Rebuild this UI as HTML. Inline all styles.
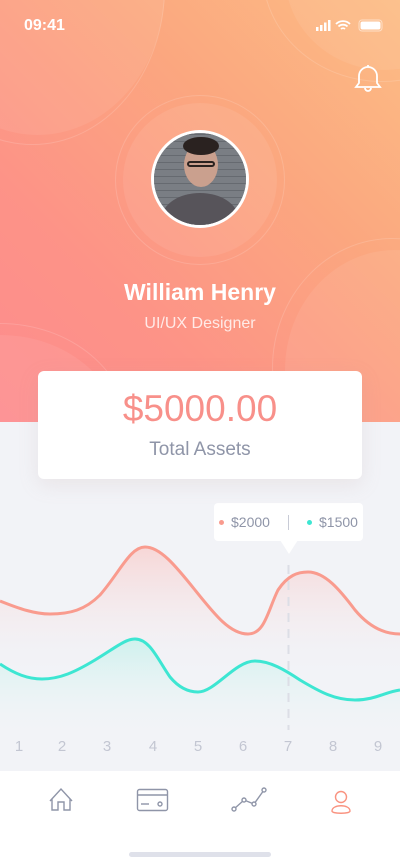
<!DOCTYPE html>
<html><head><meta charset="utf-8"><style>
*{margin:0;padding:0;box-sizing:border-box}
body{width:400px;height:866px;overflow:hidden;font-family:"Liberation Sans",sans-serif;background:#f2f3f7;position:relative}
.hdr{position:absolute;left:0;top:0;width:400px;height:422px;overflow:hidden;background:linear-gradient(225deg,#fcbd85 0%,#fba77f 35%,#fd9387 70%,#fd8c8e 100%)}
.c{position:absolute;border-radius:50%}
.abs{position:absolute}
</style></head><body>
<div class="hdr">
 <div class="c" style="left:-90px;top:-160px;width:255px;height:295px;background:rgba(255,255,255,.07)"></div>
 <div class="c" style="left:-100px;top:-170px;width:265px;height:315px;border:1px solid rgba(255,255,255,.15)"></div>
 <div class="c" style="left:285px;top:-120px;width:200px;height:190px;background:rgba(255,255,255,.07)"></div>
 <div class="c" style="left:262px;top:-140px;width:240px;height:222px;border:1px solid rgba(255,255,255,.15)"></div>
 <div class="c" style="left:285px;top:250px;width:220px;height:240px;background:rgba(255,255,255,.07)"></div>
 <div class="c" style="left:272px;top:238px;width:240px;height:260px;border:1px solid rgba(255,255,255,.15)"></div>
 <div class="c" style="left:-120px;top:335px;width:240px;height:200px;background:rgba(255,255,255,.07)"></div>
 <div class="c" style="left:-130px;top:323px;width:260px;height:220px;border:1px solid rgba(255,255,255,.15)"></div>
 <div class="c" style="left:123px;top:103px;width:154px;height:154px;background:rgba(255,255,255,.08)"></div>
 <div class="c" style="left:115px;top:95px;width:170px;height:170px;border:1px solid rgba(255,255,255,.15)"></div>
 <div class="c" style="left:151px;top:130px;width:98px;height:98px;background:#fff"></div>
 <div class="c" style="left:154px;top:133px;width:92px;height:92px;overflow:hidden;background:#6e7278">
  <div class="abs" style="left:0;top:0;width:92px;height:92px;background:repeating-linear-gradient(0deg,#7a7e84 0 6px,#666a70 6px 7px)"></div>
  <div class="c" style="left:8px;top:60px;width:76px;height:50px;background:#57545a"></div>
  <div class="c" style="left:30px;top:10px;width:34px;height:44px;background:#caa08e"></div>
  <div class="c" style="left:29px;top:4px;width:36px;height:18px;background:#2a2220"></div>
  <div class="abs" style="left:33px;top:28px;width:28px;height:6px;border:2px solid #2a2220;border-radius:3px"></div>
 </div>
 <div class="abs" style="left:24px;top:17px;color:#fff;font-size:16px;font-weight:bold">09:41</div>
 <svg class="abs" style="left:314px;top:18px" width="70" height="16" viewBox="0 0 70 16">
  <g fill="#fff"><rect x="2" y="9" width="2.5" height="4"/><rect x="6" y="7" width="2.5" height="6"/><rect x="10" y="4.5" width="2.5" height="8.5"/><rect x="14" y="2" width="2.5" height="11"/></g>
  <path d="M22 6a10 10 0 0 1 14 0M24.5 8.5a6.5 6.5 0 0 1 9 0M27 11a3 3 0 0 1 4 0" stroke="#fff" stroke-width="1.8" fill="none"/>
  <rect x="45" y="2" width="23" height="11" rx="3" fill="none" stroke="rgba(255,255,255,.5)"/><rect x="46.5" y="3.5" width="20" height="8" rx="2" fill="#fff"/>
 </svg>
 <svg class="abs" style="left:352px;top:63px" width="32" height="32" viewBox="0 0 32 32" fill="none" stroke="#fff" stroke-width="1.8">
  <path d="M4 24h24l-3-4V13a9 9 0 0 0-18 0v7z"/><path d="M13 25a3 3 0 0 0 6 0"/><path d="M16 2v2"/>
 </svg>
 <div class="abs" style="left:0;width:400px;top:279px;text-align:center;color:#fff;font-size:23px;font-weight:bold">William Henry</div>
 <div class="abs" style="left:0;width:400px;top:315px;text-align:center;color:rgba(255,255,255,.8);font-size:16px">UI/UX Designer</div>
</div>
<svg class="abs" style="left:0;top:480px" width="400" height="290" viewBox="0 480 400 290">
 <defs>
  <linearGradient id="r" x1="0" y1="0" x2="0" y2="1"><stop offset="0" stop-color="#fbc3c0" stop-opacity=".6"/><stop offset="1" stop-color="#f2f3f7" stop-opacity="0"/></linearGradient>
  <linearGradient id="t" x1="0" y1="0" x2="0" y2="1"><stop offset="0" stop-color="#b6f2e8" stop-opacity=".6"/><stop offset="1" stop-color="#f2f3f7" stop-opacity="0"/></linearGradient>
 </defs>
 <path d="M0 601C20 609 35 614 50 614C70 614 85 610 100 595C120 572 130 547 145 547C160 547 175 565 195 590C215 615 230 634 248 634C265 634 268 610 278 590C288 575 298 572 308 572C325 572 340 590 355 610C370 628 385 634 400 634V680H0Z" fill="url(#r)"/>
 <path d="M0 601C20 609 35 614 50 614C70 614 85 610 100 595C120 572 130 547 145 547C160 547 175 565 195 590C215 615 230 634 248 634C265 634 268 610 278 590C288 575 298 572 308 572C325 572 340 590 355 610C370 628 385 634 400 634" fill="none" stroke="#f99b8e" stroke-width="3"/>
 <path d="M0 664C15 674 28 679 42 679C60 679 75 672 95 660C115 648 125 639 135 639C150 639 158 660 170 677C180 689 190 692 198 692C215 692 235 661 255 661C270 661 285 670 300 680C320 692 335 700 355 700C375 700 385 692 400 690V740H0Z" fill="url(#t)"/>
 <path d="M0 664C15 674 28 679 42 679C60 679 75 672 95 660C115 648 125 639 135 639C150 639 158 660 170 677C180 689 190 692 198 692C215 692 235 661 255 661C270 661 285 670 300 680C320 692 335 700 355 700C375 700 385 692 400 690" fill="none" stroke="#3de6d2" stroke-width="3"/>
 <line x1="288.5" y1="565" x2="288.5" y2="730" stroke="#dcdee6" stroke-width="2" stroke-dasharray="9 7"/>
 <g font-family="Liberation Sans" font-size="15" fill="#c3c6d2" text-anchor="middle">
  <text x="19" y="751">1</text><text x="62" y="751">2</text><text x="107" y="751">3</text><text x="153" y="751">4</text><text x="198" y="751">5</text><text x="243" y="751">6</text><text x="288" y="751">7</text><text x="333" y="751">8</text><text x="378" y="751">9</text>
 </g>
</svg>
<div class="abs" style="left:214px;top:503px;width:149px;height:38px;background:#fff;border-radius:4px"></div>
<div class="abs" style="left:280px;top:540px;width:0;height:0;border-left:9px solid transparent;border-right:9px solid transparent;border-top:14px solid #fff"></div>
<div class="abs" style="left:219px;top:520px;width:5px;height:5px;border-radius:50%;background:#f99b8e"></div>
<div class="abs" style="left:231px;top:514px;font-size:14px;color:#8f95a8">$2000</div>
<div class="abs" style="left:288px;top:515px;width:1px;height:15px;background:#c8cbd6"></div>
<div class="abs" style="left:307px;top:520px;width:5px;height:5px;border-radius:50%;background:#3de6d2"></div>
<div class="abs" style="left:319px;top:514px;font-size:14px;color:#8f95a8">$1500</div>
<div class="abs" style="left:38px;top:371px;width:324px;height:108px;background:#fff;border-radius:6px;box-shadow:0 6px 20px rgba(180,150,150,.15)"></div>
<div class="abs" style="left:38px;width:324px;top:388px;text-align:center;font-size:37px;color:#f8908a">$5000.00</div>
<div class="abs" style="left:38px;width:324px;top:439px;text-align:center;font-size:19px;color:#8f95a8">Total Assets</div>
<div class="abs" style="left:0;top:771px;width:400px;height:95px;background:#fff"></div>
<svg class="abs" style="left:0;top:780px" width="400" height="40" viewBox="0 780 400 40" fill="none" stroke-width="1.4">
 <path d="M50 801L61 789L72 801M52 799V810H58V802H64V810H70V799" stroke="#8f95a8"/>
 <rect x="137.5" y="789.5" width="30" height="21" rx="2" stroke="#8f95a8"/><line x1="137.5" y1="795" x2="167.5" y2="795" stroke="#8f95a8"/><line x1="141" y1="804" x2="149" y2="804" stroke="#8f95a8"/><circle cx="160" cy="804" r="2" stroke="#8f95a8"/>
 <path d="M234 809L244 800L254 804L264 790" stroke="#8f95a8"/><circle cx="234" cy="809" r="2" fill="#fff" stroke="#8f95a8"/><circle cx="244" cy="800" r="2" fill="#fff" stroke="#8f95a8"/><circle cx="254" cy="804" r="2" fill="#fff" stroke="#8f95a8"/><circle cx="264" cy="790" r="2" fill="#fff" stroke="#8f95a8"/>
 <circle cx="341" cy="797" r="5.5" stroke="#f99380"/><path d="M332 811C332 804 350 804 350 811C350 814 332 814 332 811Z" stroke="#f99380"/>
</svg>
<div class="abs" style="left:129px;top:852px;width:142px;height:5px;border-radius:3px;background:#dfe1ea"></div>
</body></html>
